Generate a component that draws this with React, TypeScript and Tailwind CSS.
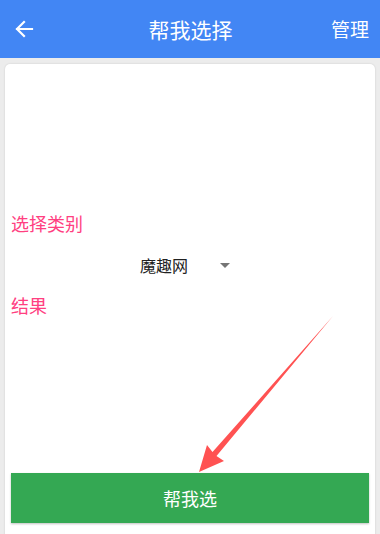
import React from "react";

const font = { fontFamily: '"Noto Sans CJK SC", "Noto Sans", sans-serif' };

export default function App() {
  return (
    <div className="relative w-[380px] h-[534px] overflow-hidden bg-[#ececec]" style={font}>
      <div className="h-[58px] bg-[#4286f4] flex items-center px-[14px] text-white">
        <svg width="20" height="20" viewBox="0 0 20 20" className="shrink-0">
          <path d="M18 10H3M10 3L3 10l7 7" fill="none" stroke="white" strokeWidth="2.2" strokeLinecap="square" />
        </svg>
        <div className="flex-1 text-center text-[21px] leading-[28px] pl-[16px]">帮我选择</div>
        <div className="text-[19px] leading-[28px] -mr-[3px]">管理</div>
      </div>
      <div className="mx-[5px] mt-[6px] h-[480px] bg-white rounded-[5px] shadow-[0_0_2px_rgba(0,0,0,0.15)] flex flex-col px-[6px]">
        <div className="mt-[147px] text-[18px] leading-[24px] text-[#ff4081]">选择类别</div>
        <div className="mt-[14px] h-[32px] flex items-center ml-[129px]">
          <span className="text-[16px] leading-[20px] text-[#212121]">魔趣网</span>
          <span className="ml-[32px] w-0 h-0 border-l-[5px] border-r-[5px] border-t-[5px] border-l-transparent border-r-transparent border-t-[#757575]" />
        </div>
        <div className="mt-[12px] text-[18px] leading-[24px] text-[#ff4081]">结果</div>
        <div className="mt-[156px] h-[50px] bg-[#34a853] shadow-[0_1px_2px_rgba(0,0,0,0.25)] flex items-center justify-center text-white text-[18px]">
          帮我选
        </div>
      </div>
      <svg className="absolute left-0 top-0 pointer-events-none" width="380" height="534" viewBox="0 0 380 534">
        <polygon points="199,472 207,445 212.5,452 333,316 216.5,456 224,461" fill="#ff5252" />
      </svg>
    </div>
  );
}
